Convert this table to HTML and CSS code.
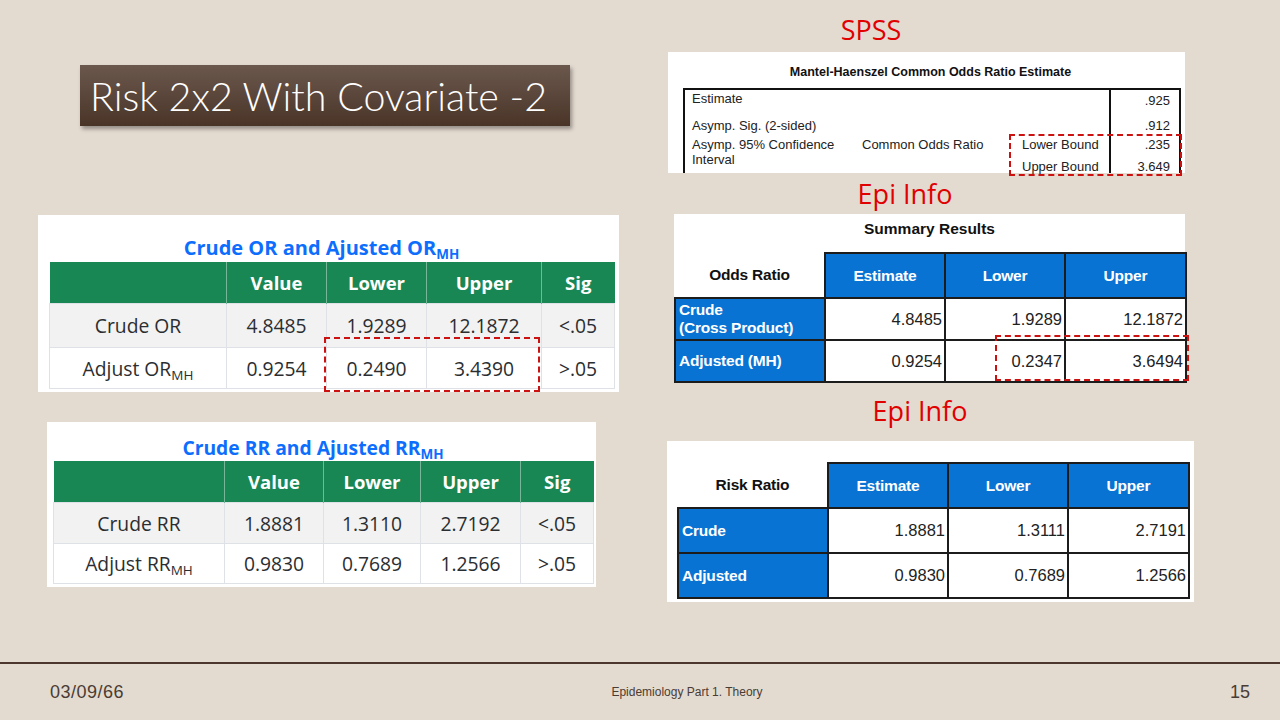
FILE: index.html
```html
<!DOCTYPE html>
<html lang="en">
<head>
<meta charset="utf-8">
<title>Risk 2x2 With Covariate -2</title>
<link rel="stylesheet" href="styles.css">
</head>
<body>
<div class="slide">
  <div class="content">
    <div class="col-left">
      <div class="title-box"><h1>Risk 2x2 With Covariate -2</h1></div>

      <div class="card card-or">
        <div class="card-title">Crude OR and Ajusted OR<sub>MH</sub></div>
        <table class="bs-table t-or">
          <colgroup><col class="c1"><col class="c2"><col class="c3"><col class="c4"><col class="c5"></colgroup>
          <thead>
            <tr><th></th><th>Value</th><th>Lower</th><th>Upper</th><th>Sig</th></tr>
          </thead>
          <tbody>
            <tr class="striped"><td>Crude OR</td><td>4.8485</td><td>1.9289</td><td>12.1872</td><td>&lt;.05</td></tr>
            <tr><td>Adjust OR<sub>MH</sub></td><td>0.9254</td><td>0.2490</td><td>3.4390</td><td>&gt;.05</td></tr>
          </tbody>
        </table>
        <div class="dash dash-or"></div>
      </div>

      <div class="card card-rr">
        <div class="card-title">Crude RR and Ajusted RR<sub>MH</sub></div>
        <table class="bs-table t-rr">
          <colgroup><col class="c1"><col class="c2"><col class="c3"><col class="c4"><col class="c5"></colgroup>
          <thead>
            <tr><th></th><th>Value</th><th>Lower</th><th>Upper</th><th>Sig</th></tr>
          </thead>
          <tbody>
            <tr class="striped"><td>Crude RR</td><td>1.8881</td><td>1.3110</td><td>2.7192</td><td>&lt;.05</td></tr>
            <tr><td>Adjust RR<sub>MH</sub></td><td>0.9830</td><td>0.7689</td><td>1.2566</td><td>&gt;.05</td></tr>
          </tbody>
        </table>
      </div>
    </div>

    <div class="col-right">
      <div class="label label-spss">SPSS</div>
      <div class="spss">
        <div class="spss-title">Mantel-Haenszel Common Odds Ratio Estimate</div>
        <div class="spss-grid">
          <div class="sc r1 c-a">Estimate</div>
          <div class="sc r1 c-b"></div>
          <div class="sc r1 c-c"></div>
          <div class="sc r1 val">.925</div>
          <div class="sc r2 c-a">Asymp. Sig. (2-sided)</div>
          <div class="sc r2 c-b"></div>
          <div class="sc r2 c-c"></div>
          <div class="sc r2 val">.912</div>
          <div class="sc r34 c-a">Asymp. 95% Confidence Interval</div>
          <div class="sc r3 c-b">Common Odds Ratio</div>
          <div class="sc r3 c-c">Lower Bound</div>
          <div class="sc r3 val">.235</div>
          <div class="sc r4 c-b"></div>
          <div class="sc r4 c-c">Upper Bound</div>
          <div class="sc r4 val">3.649</div>
        </div>
        <div class="dash dash-spss"></div>
      </div>

      <div class="label label-epi1">Epi Info</div>
      <div class="epi epi-or">
        <div class="epi-title">Summary Results</div>
        <table class="epi-table">
          <colgroup><col class="e1"><col class="e2"><col class="e3"><col class="e4"></colgroup>
          <tr class="eh"><th class="corner">Odds Ratio</th><th>Estimate</th><th>Lower</th><th>Upper</th></tr>
          <tr class="er"><th class="rl">Crude<br>(Cross Product)</th><td>4.8485</td><td>1.9289</td><td>12.1872</td></tr>
          <tr class="er"><th class="rl">Adjusted (MH)</th><td>0.9254</td><td>0.2347</td><td>3.6494</td></tr>
        </table>
        <div class="dash dash-epi"></div>
      </div>

      <div class="label label-epi2">Epi Info</div>
      <div class="epi epi-rr">
        <table class="epi-table">
          <colgroup><col class="e1"><col class="e2"><col class="e3"><col class="e4"></colgroup>
          <tr class="eh"><th class="corner">Risk Ratio</th><th>Estimate</th><th>Lower</th><th>Upper</th></tr>
          <tr class="er"><th class="rl">Crude</th><td>1.8881</td><td>1.3111</td><td>2.7191</td></tr>
          <tr class="er"><th class="rl">Adjusted</th><td>0.9830</td><td>0.7689</td><td>1.2566</td></tr>
        </table>
      </div>
    </div>
  </div>

  <footer class="footer">
    <div class="f-date">03/09/66</div>
    <div class="f-center">Epidemiology Part 1. Theory</div>
    <div class="f-num">15</div>
  </footer>
</div>
</body>
</html>
```

FILE: styles.css
```css
html, body {
  margin: 0;
  padding: 0;
  background: #e3dad0;
}

.slide {
  width: 1280px;
  height: 720px;
  background: #e3dad0;
  display: flex;
  flex-direction: column;
  overflow: hidden;
  font-family: "Liberation Sans", Arial, sans-serif;
}

.content {
  height: 662px;
  display: flex;
}

/* ---------- left column ---------- */
.col-left {
  width: 640px;
  padding-top: 65px;
  box-sizing: border-box;
  display: flex;
  flex-direction: column;
  align-items: flex-start;
}

.title-box {
  margin-left: 80px;
  width: 490px;
  height: 61px;
  box-sizing: border-box;
  padding-left: 10px;
  display: flex;
  align-items: center;
  background: linear-gradient(#6b584d, #4a3428);
  box-shadow: 2px 3px 4px rgba(0, 0, 0, 0.35);
}

.title-box h1 {
  margin: 0;
  font-family: Lato, "Open Sans", sans-serif;
  font-weight: 300;
  font-size: 39.4px;
  line-height: 1;
  color: #ffffff;
  white-space: nowrap;
}

.card {
  position: relative;
  background: #ffffff;
  box-sizing: border-box;
  font-family: "Open Sans", "Noto Sans", sans-serif;
}

.card-or {
  margin-left: 38px;
  margin-top: 89px;
  width: 581px;
  height: 177px;
  padding: 19px 5px 0 11px;
}

.card-rr {
  margin-left: 47px;
  margin-top: 30px;
  width: 549px;
  height: 165px;
  padding: 12px 3px 0 6px;
}

.card-title {
  text-align: center;
  font-weight: 700;
  font-size: 20px;
  line-height: 28px;
  height: 28px;
  padding-right: 20px;
  color: #0d6efd;
  white-space: nowrap;
}

.card-rr .card-title {
  font-size: 19.3px;
  line-height: 27px;
  height: 27px;
}

.card-title sub {
  font-size: 13.5px;
  line-height: 0;
  vertical-align: -4px;
}

.bs-table {
  width: 100%;
  border-collapse: collapse;
  table-layout: fixed;
}

.bs-table th {
  background: #198754;
  color: #ffffff;
  font-weight: 700;
  font-size: 18.5px;
  height: 41px;
  padding: 0;
  text-align: center;
  border-left: 1px solid rgba(255, 255, 255, 0.4);
}

.bs-table th:first-child {
  border-left: none;
}

.bs-table td {
  font-size: 19.3px;
  color: #2b2e31;
  text-align: center;
  padding: 0;
  border: 1px solid #dee2e6;
  white-space: nowrap;
}

.bs-table tr.striped td {
  background: #f2f2f2;
}

.bs-table td sub {
  font-size: 13.5px;
  line-height: 0;
  vertical-align: -4px;
}

.t-or tbody tr:first-child td { height: 43px; }
.t-or tbody tr:last-child td { height: 40px; }
.t-or .c1 { width: 177px; }
.t-or .c2 { width: 100px; }
.t-or .c3 { width: 100px; }
.t-or .c4 { width: 115px; }
.t-or .c5 { width: 73px; }

.t-rr tbody tr:first-child td { height: 40px; }
.t-rr tbody tr:last-child td { height: 39px; }
.t-rr .c1 { width: 171px; }
.t-rr .c2 { width: 99px; }
.t-rr .c3 { width: 97px; }
.t-rr .c4 { width: 100px; }
.t-rr .c5 { width: 73px; }

/* red dashed highlight overlays */
.dash {
  position: absolute;
  border: 2px dashed #cc1111;
  box-sizing: border-box;
}

.dash-or {
  left: 286px;
  top: 122px;
  width: 216px;
  height: 55px;
}

/* ---------- right column ---------- */
.col-right {
  flex: 1;
  padding-top: 13px;
  display: flex;
  flex-direction: column;
  align-items: flex-start;
}

.label {
  width: 200px;
  text-align: center;
  font-family: "Open Sans", "Noto Sans", sans-serif;
  font-size: 27px;
  line-height: 34px;
  height: 34px;
  color: #e00000;
}

.label-spss { margin-left: 131px; }
.label-epi1 { margin-left: 165px; margin-top: 4px; }
.label-epi2 { margin-left: 180px; margin-top: 11px; }

.spss {
  position: relative;
  margin-left: 28px;
  margin-top: 5px;
  width: 517px;
  height: 121px;
  background: #ffffff;
  box-sizing: border-box;
  padding-top: 12px;
  color: #1f1f1f;
}

.spss-title {
  text-align: center;
  font-weight: 700;
  font-size: 12.5px;
  line-height: 16px;
  padding-left: 8px;
  color: #111;
}

.spss-grid {
  margin-top: 8px;
  margin-left: 15px;
  width: 498px;
  box-sizing: border-box;
  border-top: 2px solid #111;
  border-left: 2px solid #111;
  border-right: 2px solid #111;
  display: grid;
  grid-template-columns: 170px 155px 99px 70px;
  grid-template-rows: 26px 18px 21px 18px;
  font-size: 13px;
  color: #222;
}

.sc {
  line-height: 15px;
  white-space: nowrap;
}

.sc.c-a { padding-left: 7px; grid-column: 1; }
.sc.c-b { padding-left: 7px; grid-column: 2; }
.sc.c-c { padding-left: 12px; grid-column: 3; }
.sc.val {
  grid-column: 4;
  text-align: right;
  padding-right: 9px;
  border-left: 2px solid #111;
}

.sc.r1 { grid-row: 1; padding-top: 1px; }
.sc.r2 { grid-row: 2; padding-top: 2px; }
.sc.r3 { grid-row: 3; padding-top: 3px; }
.sc.r4 { grid-row: 4; padding-top: 4px; }
.sc.r34 { grid-row: 3 / 5; padding-top: 3px; white-space: normal; padding-right: 12px; }
.sc.r1.val { padding-top: 3px; }

.dash-spss {
  left: 341px;
  top: 82px;
  width: 173px;
  height: 42px;
}

.epi {
  position: relative;
  background: #ffffff;
  box-sizing: border-box;
}

.epi-or {
  margin-left: 34px;
  margin-top: 3px;
  width: 511px;
  height: 169px;
  padding-top: 7px;
}

.epi-rr {
  margin-left: 27px;
  margin-top: 13px;
  width: 527px;
  height: 161px;
  padding: 21px 0 0 10px;
}

.epi-title {
  text-align: center;
  font-weight: 700;
  font-size: 15.5px;
  line-height: 16px;
  margin-bottom: 15px;
  color: #111;
}

.epi-table {
  border-collapse: collapse;
  table-layout: fixed;
  width: 511px;
}

.epi-table .e1 { width: 150px; }
.epi-table .e2 { width: 120px; }
.epi-table .e3 { width: 120px; }
.epi-table .e4 { width: 121px; }

.epi-table th,
.epi-table td {
  border: 2px solid #1c1c1c;
  padding: 0;
}

.epi-table tr.eh th {
  height: 43px;
  background: #0873d2;
  color: #ffffff;
  font-size: 15.5px;
  font-weight: 700;
  text-align: center;
  letter-spacing: -0.2px;
}

.epi-table tr.eh th.corner {
  background: #ffffff;
  color: #111;
  border-top: none;
  border-left: none;
}

.epi-table tr.er th,
.epi-table tr.er td {
  height: 40px;
}

.epi-rr .epi-table tr.er th,
.epi-rr .epi-table tr.er td { height: 43px; }

.epi-table th.rl {
  background: #0873d2;
  color: #ffffff;
  font-size: 15.5px;
  font-weight: 700;
  text-align: left;
  padding-left: 3px;
  line-height: 18px;
  letter-spacing: -0.2px;
}

.epi-table td {
  text-align: right;
  font-size: 16.5px;
  color: #222;
  padding-right: 2px;
  background: #fff;
}

.dash-epi {
  left: 321px;
  top: 121px;
  width: 194px;
  height: 46px;
}

/* ---------- footer ---------- */
.footer {
  flex: 1;
  border-top: 2px solid #4b372c;
  display: flex;
  align-items: center;
  justify-content: space-between;
  padding: 0 30px 0 50px;
  color: #4a3c33;
  font-family: "Liberation Sans", Arial, sans-serif;
}

.f-date {
  width: 200px;
  font-size: 18px;
  letter-spacing: 0.5px;
}

.f-center {
  font-size: 12px;
  margin-left: 74px;
}

.f-num {
  width: 200px;
  text-align: right;
  font-size: 18px;
}
```
